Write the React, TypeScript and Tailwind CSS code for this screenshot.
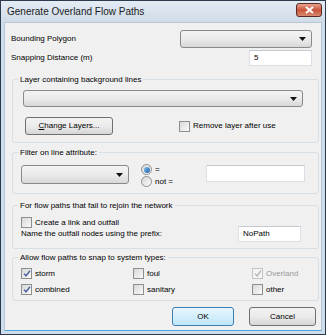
import React from 'react';

const font = "font-['Liberation_Sans',Arial,sans-serif]";

const Combo: React.FC<{ className?: string }> = ({ className = '' }) => (
  <div
    className={`flex items-center justify-end pr-[5px] border border-[#8a8a8a] rounded-[3px] bg-gradient-to-b from-[#f3f3f3] via-[#ebebeb] to-[#d8d8d8] ${className}`}
  >
    <svg width="7" height="4" viewBox="0 0 7 4">
      <path d="M0 0h7L3.5 4z" fill="#111" />
    </svg>
  </div>
);

const TextBox: React.FC<{ value?: string; className?: string }> = ({ value = '', className = '' }) => (
  <div
    className={`flex items-center pl-[4px] bg-white border border-[#dcdfe6] border-t-[#c5c9d2] text-[8px] text-black ${className}`}
  >
    {value}
  </div>
);

const Check: React.FC<{ checked?: boolean; disabled?: boolean; label: string }> = ({
  checked,
  disabled,
  label,
}) => (
  <div className="flex items-center gap-[3px] h-[11px]">
    <span
      className={`w-[11px] h-[11px] border flex items-center justify-center ${
        disabled ? 'border-[#c4c4c4] bg-[#f4f4f4]' : 'border-[#8e8f8f] bg-gradient-to-br from-[#d8d8d8] to-[#fafafa]'
      }`}
    >
      {checked && (
        <svg width="8" height="7" viewBox="0 0 8 7">
          <path
            d="M1 3.6L3 5.8L7 0.8"
            fill="none"
            stroke={disabled ? '#b8b8b8' : '#4c61a0'}
            strokeWidth="1.4"
          />
        </svg>
      )}
    </span>
    <span className={disabled ? 'text-[#9a9a9a]' : 'text-black'}>{label}</span>
  </div>
);

const Radio: React.FC<{ checked?: boolean; label: string }> = ({ checked, label }) => (
  <div className="flex items-center gap-[3px] h-[11px]">
    <span className="w-[11px] h-[11px] rounded-full border border-[#8e8f8f] bg-gradient-to-br from-[#d8d8d8] to-[#fafafa] flex items-center justify-center">
      {checked && <span className="w-[6px] h-[6px] rounded-full bg-gradient-to-br from-[#7fc0f0] to-[#1c5fa8]" />}
    </span>
    <span>{label}</span>
  </div>
);

const Group: React.FC<{ title: string; className?: string; children: React.ReactNode }> = ({
  title,
  className = '',
  children,
}) => (
  <div className={`relative ml-[7px] mr-[2px] border border-[#d5dfe5] rounded-[3px] ${className}`}>
    <span className="absolute -top-[6px] left-[5px] px-[2px] leading-[11px] bg-[#f0f0f0]">{title}</span>
    {children}
  </div>
);

const Button: React.FC<{ label: React.ReactNode; primary?: boolean; className?: string }> = ({
  label,
  primary,
  className = '',
}) => (
  <div
    className={`flex items-center justify-center rounded-[3px] border ${
      primary
        ? 'border-[#3c7fb1] bg-gradient-to-b from-[#e9f6fd] via-[#d4eefb] to-[#bde6fb]'
        : 'border-[#707070] bg-gradient-to-b from-[#f2f2f2] via-[#ebebeb] to-[#d6d6d6]'
    } ${className}`}
  >
    {label}
  </div>
);

export default function App() {
  return (
    <div className={`w-[326px] h-[335px] flex flex-col border border-[#2b3a4c] bg-[#cfdceb] ${font} text-[8px] text-black`}>
      {/* title bar */}
      <div className="h-[21px] flex items-center justify-between pl-[6px] pr-[3px] bg-gradient-to-b from-[#e4ecf5] to-[#cfdbe8]">
        <span className="text-[10px] text-[#1b1b1b]">Generate Overland Flow Paths</span>
        <div className="w-[26px] h-[14px] mb-[3px] rounded-[3px] border border-[#5a2b23] bg-gradient-to-b from-[#e8a493] via-[#c8543a] to-[#d88a6f] flex items-center justify-center">
          <svg width="9" height="8" viewBox="0 0 9 8">
            <path d="M1 1l7 6M8 1L1 7" stroke="#fff" strokeWidth="2" />
          </svg>
        </div>
      </div>

      {/* content */}
      <div className="flex-1 mx-[3px] mb-[3px] bg-[#f0f0f0] border border-[#b9c6d4] border-b-[#4aa6df] flex flex-col">
        <div className="flex items-center justify-between mt-[7px] h-[18px] pl-[6px] pr-[9px]">
          <span>Bounding Polygon</span>
          <Combo className="w-[132px] h-[18px]" />
        </div>
        <div className="flex items-center justify-between mt-[2px] h-[16px] pl-[6px] pr-[9px]">
          <span>Snapping Distance (m)</span>
          <TextBox value="5" className="w-[63px] h-[16px]" />
        </div>

        <Group title="Layer containing background lines" className="mt-[13px] h-[64px] pl-[10px] pr-[15px] pt-[10px]">
          <Combo className="h-[17px]" />
          <div className="flex items-center mt-[10px]">
            <Button
              label={
                <span>
                  <span className="underline">C</span>hange Layers...
                </span>
              }
              className="w-[88px] h-[18px] ml-[2px]"
            />
            <div className="ml-[66px]">
              <Check label="Remove layer after use" />
            </div>
          </div>
        </Group>

        <Group title="Filter on line attribute:" className="mt-[9px] h-[42px] flex items-start pl-[8px] pt-[12px]">
          <Combo className="w-[108px] h-[19px]" />
          <div className="flex flex-col ml-[12px] mt-[-1px] gap-[1px]">
            <Radio checked label="=" />
            <Radio label="not =" />
          </div>
          <TextBox className="w-[99px] h-[17px] ml-[33px]" />
        </Group>

        <Group title="For flow paths that fail to rejoin the network" className="mt-[11px] h-[44px] pl-[8px] pr-[17px] pt-[11px]">
          <Check label="Create a link and outfall" />
          <div className="flex items-center justify-between mt-[-2px]">
            <span>Name the outfall nodes using the prefix:</span>
            <TextBox value="NoPath" className="w-[63px] h-[16px]" />
          </div>
        </Group>

        <Group title="Allow flow paths to snap to system types:" className="mt-[8px] h-[44px] pl-[8px] pt-[10px]">
          <div className="grid grid-cols-[112px_119px_60px] gap-y-[5px]">
            <Check checked label="storm" />
            <Check label="foul" />
            <Check checked disabled label="Overland" />
            <Check checked label="combined" />
            <Check label="sanitary" />
            <Check label="other" />
          </div>
        </Group>

        <div className="flex justify-end gap-[15px] mt-[6px] pr-[5px]">
          <Button primary label="OK" className="w-[62px] h-[19px]" />
          <Button label="Cancel" className="w-[67px] h-[19px]" />
        </div>
      </div>
    </div>
  );
}
